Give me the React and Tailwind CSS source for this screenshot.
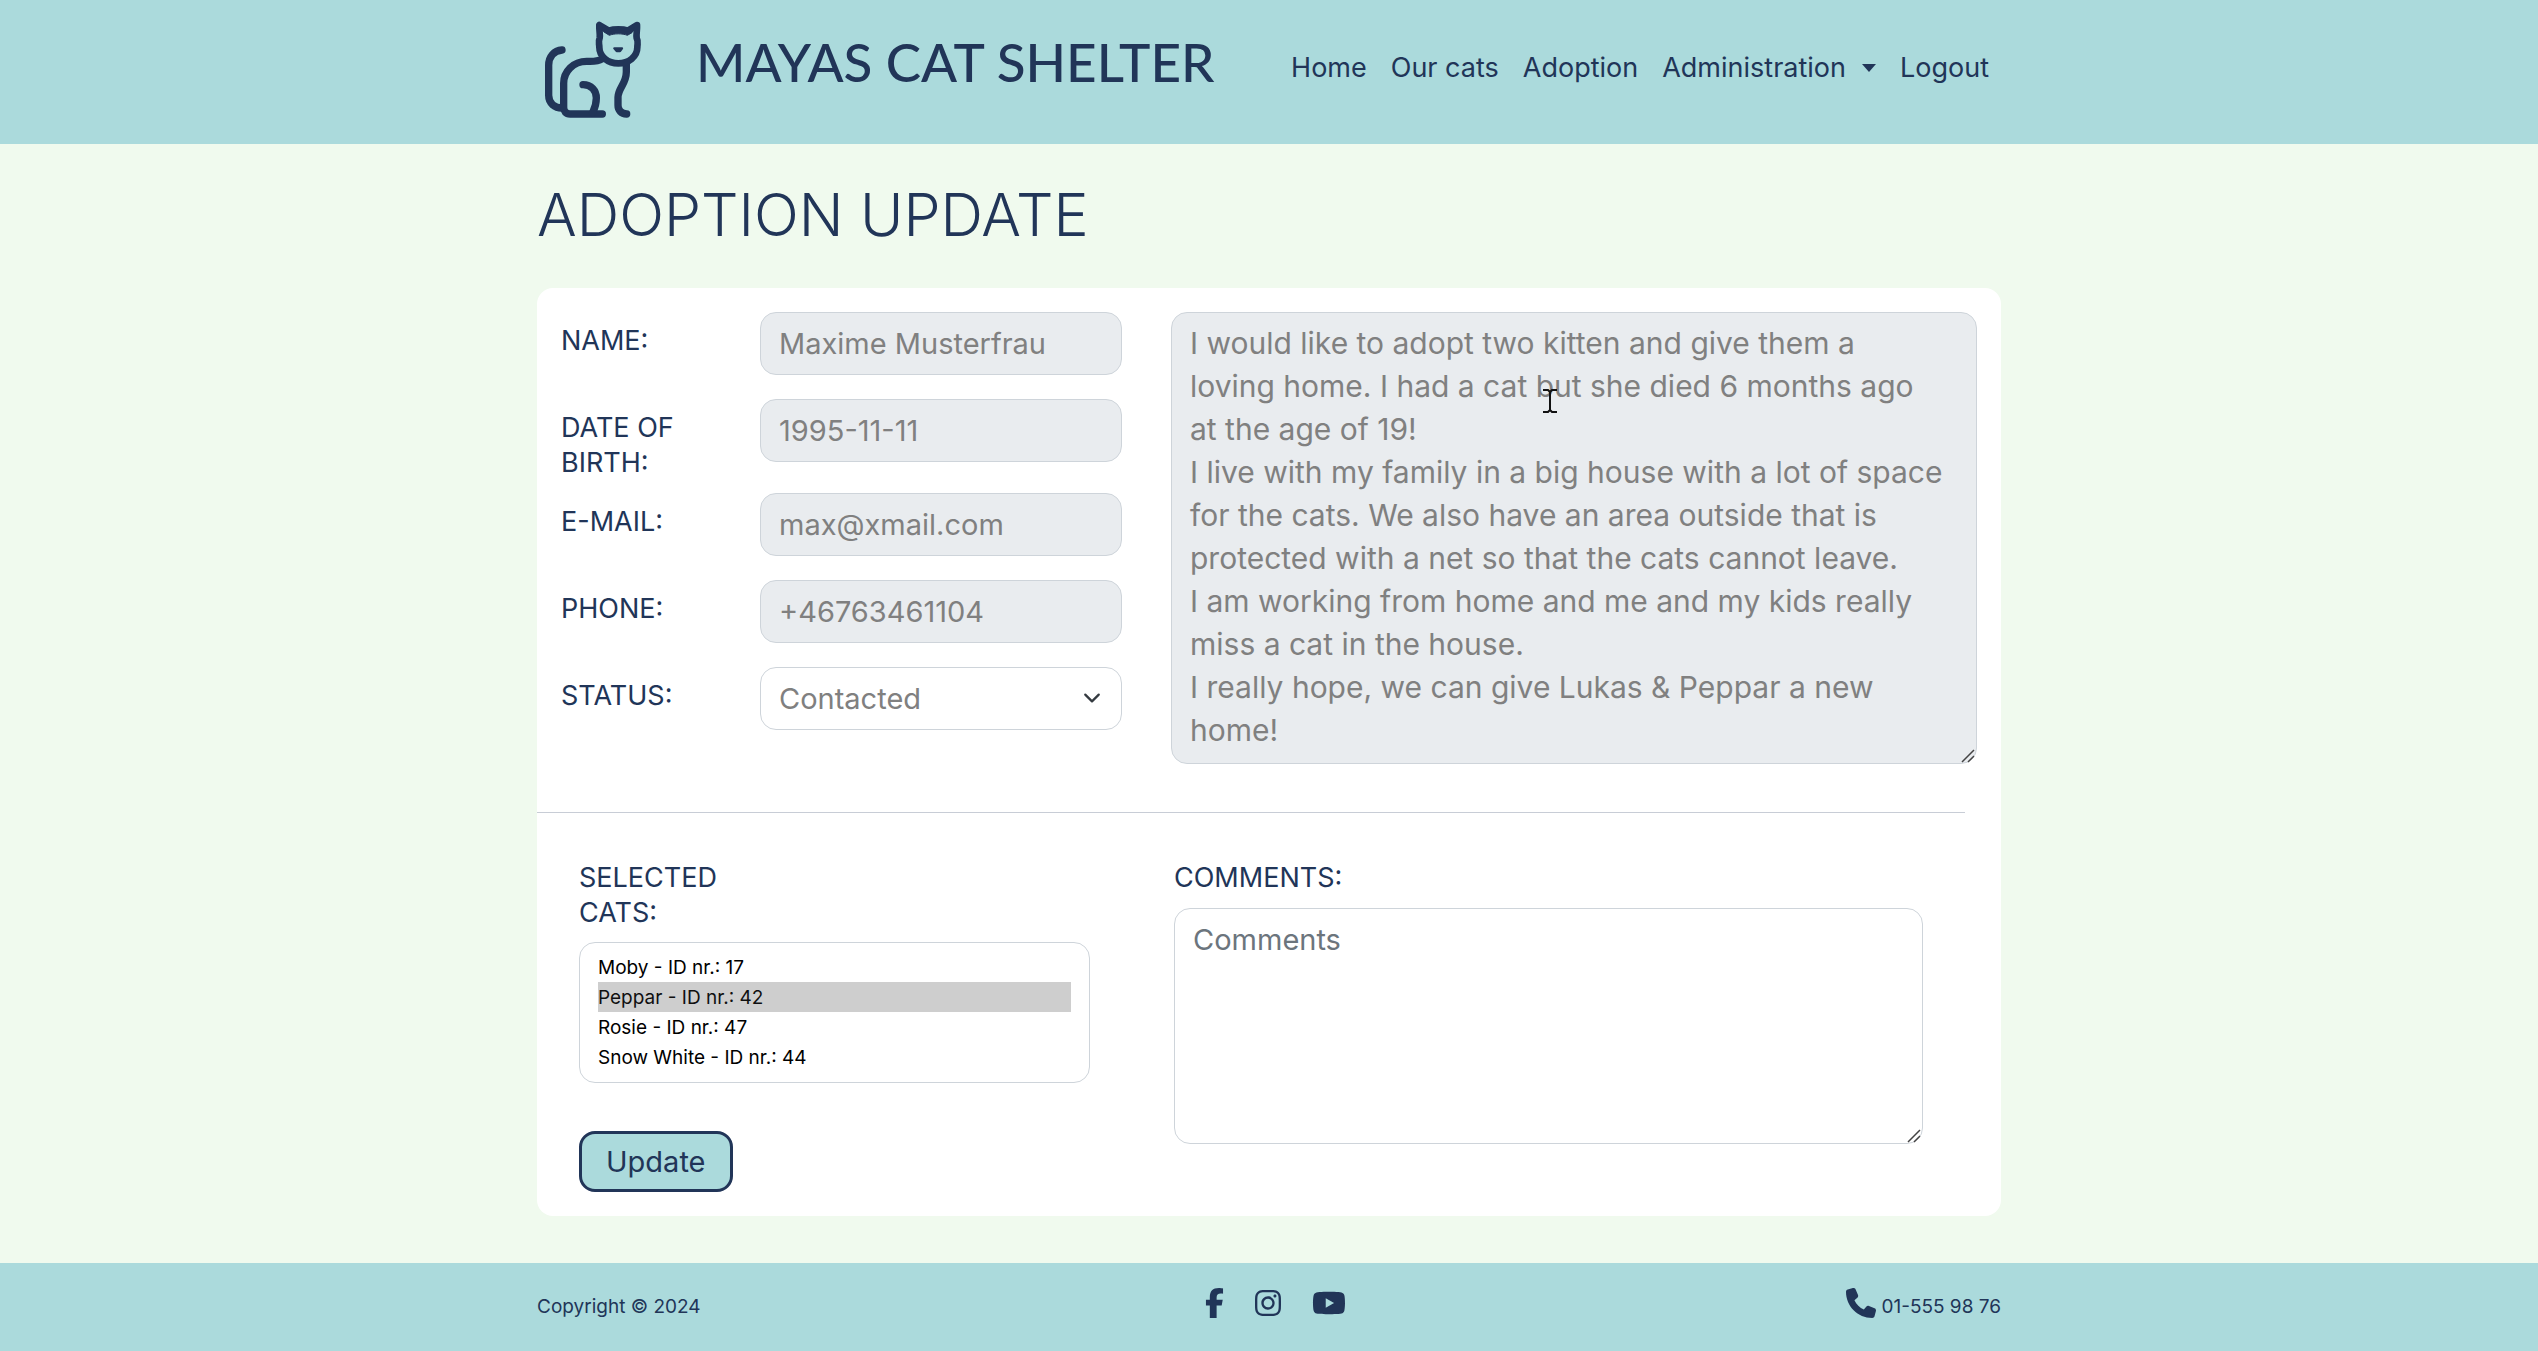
import React from "react";
import { FaFacebookF, FaInstagram, FaYoutube, FaPhone } from "react-icons/fa6";

const message = `I would like to adopt two kitten and give them a
loving home. I had a cat but she died 6 months ago
at the age of 19!
I live with my family in a big house with a lot of space
for the cats. We also have an area outside that is
protected with a net so that the cats cannot leave.
I am working from home and me and my kids really
miss a cat in the house.
I really hope, we can give Lukas & Peppar a new
home!`;

const details = [
  { id: "name", label: "Name:", value: "Maxime Musterfrau" },
  { id: "birth", label: "Date of birth:", value: "1995-11-11" },
  { id: "email", label: "E-Mail:", value: "max@xmail.com" },
  { id: "phone", label: "Phone:", value: "+46763461104" },
];

const cats = ["Moby - ID nr.: 17", "Peppar - ID nr.: 42", "Rosie - ID nr.: 47", "Snow White - ID nr.: 44"];

function CatLogo() {
  return (
    <svg viewBox="0 0 390 360" className="h-[120px] w-[130px]" fill="none" stroke="#213558" strokeWidth="22" strokeLinecap="round" strokeLinejoin="round" aria-hidden="true">
      <path d="M96 120 C72 122 56 140 56 166 V256 C56 280 74 294 96 294" />
      <path d="M216 147 C205 154 196 154 180 154 H170 C130 154 101 184 101 220 V292 C101 304 108 312 120 312 H217" />
      <path d="M159 224 C184 224 199 242 199 264 C199 284 194 296 188 308" />
      <path d="M289 162 V186 C289 222 264 234 264 262 V286 C264 302 274 311 290 312" />
      <path d="M208 45 C207 62 211 72 209 84 C204 96 208 100 208 112 C208 140 234 160 265 160 C296 160 322 140 322 112 C322 100 326 96 320 84 C318 72 322 62 321 45 L294 62 C278 57 252 57 236 62 Z" strokeWidth="20" />
      <path d="M216 50 L234 66 C250 60 280 60 294 66 L314 50 L306 68 L292 76 C278 70 252 70 238 76 L222 66 Z" fill="#213558" strokeWidth="3" />
      <path d="M253 115 H276 L270 123 H260 Z" fill="#213558" strokeWidth="7" />
    </svg>
  );
}

function Label({ htmlFor, children, className = "" }) {
  return (
    <label htmlFor={htmlFor} className={"block text-[27px] leading-[35px] uppercase " + className}>
      {children}
    </label>
  );
}

function Grip() {
  return (
    <svg viewBox="0 0 14 14" className="pointer-events-none absolute right-[2px] bottom-px size-[14px]" fill="none" stroke="#444" strokeWidth="1.5">
      <path d="M1 13 13 1M7 13 13 7" />
    </svg>
  );
}

const field = "w-full rounded-2xl border border-[#ced4da] px-[18px]";

export default function App() {
  return (
    <div className="flex min-h-screen flex-col bg-[#f0faee] font-['Inter',sans-serif] text-[#213558]">
      <header className="bg-[#abdadc]">
        <div className="mx-auto flex h-36 max-w-[1464px] items-start justify-between">
          <a href="#home" className="flex items-start gap-9">
            <span className="-ml-[7px] mt-[10px]"><CatLogo /></span>
            <span className="mt-[30px] font-['Lato',sans-serif] text-[53px] leading-[64px] font-medium whitespace-nowrap">MAYAS CAT SHELTER</span>
          </a>
          <nav className="mt-[50px] flex items-center gap-6 pr-3 text-[27px] leading-9">
            <a href="#home">Home</a>
            <a href="#cats">Our cats</a>
            <a href="#adoption">Adoption</a>
            <button type="button" className="flex items-center gap-4">
              Administration
              <span className="border-x-[7px] border-t-[8px] border-x-transparent border-t-[#213558]" />
            </button>
            <a href="#logout">Logout</a>
          </nav>
        </div>
      </header>

      <main className="mx-auto w-full max-w-[1464px] flex-1">
        <h1 className="mt-[35px] text-[59px] leading-[72px] font-light uppercase">Adoption update</h1>

        <form className="mt-[37px] rounded-2xl bg-white pb-6">
          <div className="flex gap-[49px] p-6">
            <div className="flex w-[561px] flex-col gap-[13px]">
              {details.map((d) => (
                <div key={d.id} className="flex items-start justify-between">
                  <Label htmlFor={d.id} className="w-[150px] pt-[11px]">{d.label}</Label>
                  <div className="w-[362px] pb-[11px]">
                    <input id={d.id} disabled defaultValue={d.value} className={field + " block h-[63px] bg-[#e9ecef] text-[29px] text-[#808080]"} />
                  </div>
                </div>
              ))}
              <div className="flex items-start justify-between">
                <Label htmlFor="status" className="w-[150px] pt-[11px]">Status:</Label>
                <div className="relative w-[362px]">
                  <select id="status" className={field + " block h-[63px] appearance-none bg-white text-[29px] text-[#808080]"}>
                    <option>Contacted</option>
                  </select>
                  <svg viewBox="0 0 16 16" className="pointer-events-none absolute top-[22px] right-[21px] size-[18px]" fill="none" stroke="#343a40" strokeWidth="2" strokeLinecap="round" strokeLinejoin="round">
                    <path d="m2 5 6 6 6-6" />
                  </svg>
                </div>
              </div>
            </div>
            <div className="relative min-w-0 flex-1">
              <textarea aria-label="Message" disabled defaultValue={message} className={field + " block h-[452px] resize-none overflow-hidden bg-[#e9ecef] py-[9px] text-[30px] leading-[43px] whitespace-pre text-[#808080]"} />
              <Grip />
              <svg viewBox="0 0 14 24" className="pointer-events-none absolute top-[77px] left-[372px] h-6 w-[14px]" fill="none" stroke="#111" strokeWidth="2">
                <path d="M0 1 H5 L7 3 L9 1 H14 M7 3 V21 M0 23 H5 L7 21 L9 23 H14" />
              </svg>
            </div>
          </div>

          <hr className="mt-6 mr-9 border-[#c8cdd6]" />

          <div className="mt-[47px] flex gap-[84px] pr-[78px] pl-[42px]">
            <div className="w-[511px]">
              <Label htmlFor="cats" className="w-[170px]">Selected cats:</Label>
              <select id="cats" multiple size={4} defaultValue={[cats[1]]} className="mt-3 block h-[141px] w-full overflow-hidden rounded-2xl border border-[#ced4da] bg-white px-[18px] py-[9px] text-[19px] text-black">
                {cats.map((c) => (
                  <option key={c} className="flex h-[30px] items-center p-0 font-normal">{c}</option>
                ))}
              </select>
              <button type="submit" className="mt-12 h-[61px] rounded-2xl border-3 border-[#213558] bg-[#abdadc] px-6 text-[29px]">Update</button>
            </div>
            <div className="min-w-0 flex-1">
              <Label htmlFor="comments">Comments:</Label>
              <div className="relative mt-[13px]">
                <textarea id="comments" placeholder="Comments" className={field + " block h-[236px] resize-none py-[9px] text-[29px] leading-[43px] placeholder:text-[#6c757d]"} />
                <Grip />
              </div>
            </div>
          </div>
        </form>
      </main>

      <footer className="mt-[46px] bg-[#abdadc]">
        <div className="mx-auto grid h-[88px] max-w-[1464px] grid-cols-3 items-center text-[19px]">
          <p>Copyright © 2024</p>
          <div className="flex items-center justify-center gap-[31px] pb-2 pl-3">
            <a href="#facebook" aria-label="Facebook"><FaFacebookF className="h-[30px] w-[19px]" /></a>
            <a href="#instagram" aria-label="Instagram"><FaInstagram className="h-[30px] w-[26px]" /></a>
            <a href="#youtube" aria-label="YouTube"><FaYoutube className="h-[30px] w-[34px]" /></a>
          </div>
          <p className="flex items-center justify-end gap-[5px]"><FaPhone className="mb-2 size-[30px]" />01-555 98 76</p>
        </div>
      </footer>
    </div>
  );
}
